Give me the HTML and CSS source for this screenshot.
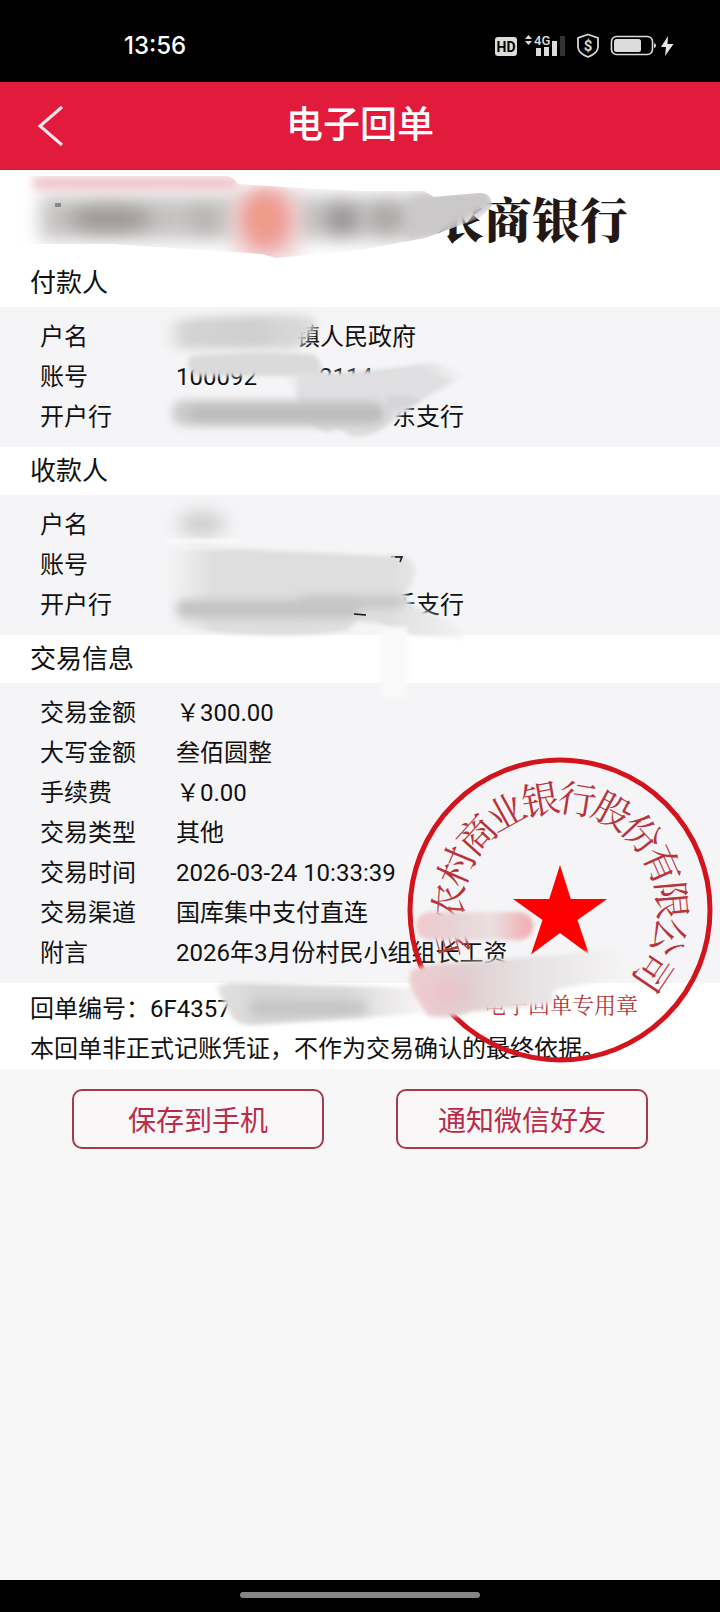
FILE: index.html
```html
<!DOCTYPE html>
<html lang="zh-CN">
<head>
<meta charset="utf-8">
<meta name="viewport" content="width=device-width, initial-scale=1">
<title>电子回单</title>
<link rel="stylesheet" href="styles.css">
</head>
<body>
<div class="status">
  <span class="clock">13:56</span>
  <svg class="status-icons" width="184" height="28" viewBox="492 31 184 28" aria-hidden="true">
    <rect x="495" y="36" width="22" height="19" rx="3" fill="#dcdcdc"/>
    <text class="hd" x="506" y="51">HD</text>
    <path d="M525 38l3.500-4 3.500 4zM525 40l3.500 4 3.500-4z" fill="#dcdcdc"/>
    <text class="net" x="534" y="44">4G</text>
    <path d="M536 47h5v8h-5zM544 46h5v9h-5zM552 40h5v15h-5z" fill="#dcdcdc"/>
    <path d="M560 35h5v20h-5z" fill="#333"/>
    <path d="M588 33.500l10 3.500v9q0 6-10 10q-10-4-10-10v-9z" fill="none" stroke="#d4d4d4" stroke-width="1.800"/>
    <text class="coin" x="588" y="50">$</text>
    <rect x="611.500" y="35.500" width="41" height="18" rx="5" fill="none" stroke="#dcdcdc" stroke-width="1.600"/>
    <rect x="614" y="38" width="27" height="13" rx="2.500" fill="#dcdcdc"/>
    <path d="M654 42q2 .5 2 2.500t-2 2.500z" fill="#dcdcdc"/>
    <path d="M668 35l-7 11h5l-1 9 8.500-12h-6z" fill="#e6e6e6"/>
  </svg>
</div>
<header class="bar">
  <button class="back" type="button" aria-label="返回">
    <svg width="28" height="44" viewBox="34 104 28 44" aria-hidden="true"><path d="M60 107L38 126l22 19" fill="none" stroke="#ffe9ee" stroke-width="3"/></svg>
  </button>
  <h1>电子回单</h1>
</header>
<main class="page">
  <div class="brand">农商银行</div>
  <h2>付款人</h2>
  <dl class="panel">
    <div class="row"><dt>户名</dt><dd class="payer">镇人民政府</dd></div>
    <div class="row"><dt>账号</dt><dd>100092<span class="tail">2114</span></dd></div>
    <div class="row"><dt>开户行</dt><dd class="branch">东支行</dd></div>
  </dl>
  <h2>收款人</h2>
  <dl class="panel">
    <div class="row"><dt>户名</dt><dd></dd></div>
    <div class="row"><dt>账号</dt><dd class="last">7</dd></div>
    <div class="row"><dt>开户行</dt><dd class="branch">乐支行</dd></div>
  </dl>
  <h2>交易信息</h2>
  <dl class="panel">
    <div class="row"><dt>交易金额</dt><dd>&#65509;300.00</dd></div>
    <div class="row"><dt>大写金额</dt><dd>叁佰圆整</dd></div>
    <div class="row"><dt>手续费</dt><dd>&#65509;0.00</dd></div>
    <div class="row"><dt>交易类型</dt><dd>其他</dd></div>
    <div class="row"><dt>交易时间</dt><dd>2026-03-24 10:33:39</dd></div>
    <div class="row"><dt>交易渠道</dt><dd>国库集中支付直连</dd></div>
    <div class="row"><dt>附言</dt><dd>2026年3月份村民小组组长工资</dd></div>
  </dl>
  <div class="notes">
    <p>回单编号&#65306;6F4357</p>
    <p>本回单非正式记账凭证&#65292;不作为交易确认的最终依据。</p>
  </div>
  <svg class="marks" width="720" height="910" viewBox="0 170 720 910" aria-hidden="true">
    <defs>
      <filter id="b1" x="-20%" y="-20%" width="140%" height="140%"><feGaussianBlur stdDeviation="2"/></filter>
      <filter id="b3" x="-20%" y="-80%" width="140%" height="260%"><feGaussianBlur stdDeviation="5"/></filter>
      <filter id="b9" x="-60%" y="-200%" width="220%" height="500%"><feGaussianBlur stdDeviation="9"/></filter>
      <linearGradient id="fade" x1="0" x2="1" y1="0" y2="0">
        <stop offset="0" stop-color="#e4e4e5" stop-opacity="0"/><stop offset=".14" stop-color="#d4d4d5"/>
        <stop offset=".6" stop-color="#cfcfd0"/><stop offset="1" stop-color="#dededf"/>
      </linearGradient>
      <linearGradient id="soft" x1="0" x2="1" y1="0" y2="0">
        <stop offset="0" stop-color="#e4e4e5" stop-opacity="0"/><stop offset=".16" stop-color="#dededf"/>
        <stop offset=".75" stop-color="#dededf"/><stop offset="1" stop-color="#f2f2f4"/>
      </linearGradient>
      <linearGradient id="right" x1="0" x2="1" y1="0" y2="0">
        <stop offset="0" stop-color="#e2e2e2"/><stop offset=".2" stop-color="#d6d6d6"/><stop offset=".6" stop-color="#d8d8d9"/><stop offset="1" stop-color="#fdf9fa"/>
      </linearGradient>
      <linearGradient id="pink" x1="0" x2="1" y1="0" y2="0">
        <stop offset="0" stop-color="#efcdd0"/><stop offset=".25" stop-color="#e0cfd2"/><stop offset=".6" stop-color="#e8e4e5"/><stop offset="1" stop-color="#f5f4f5"/>
      </linearGradient>
      <linearGradient id="pill" x1="0" x2="1" y1="0" y2="0">
        <stop offset="0" stop-color="#f2c9cd"/><stop offset=".3" stop-color="#e7d2d5"/><stop offset=".65" stop-color="#eadfe1"/><stop offset="1" stop-color="#f3a9af"/>
      </linearGradient>
      <clipPath id="band"><path d="M0 176H228Q234 178 238 184L300 188L360 191H424L434 197L478 193Q492 192 492 206L480 218L425 238L360 250L276 258L262 254L110 244H0z"/></clipPath>
    </defs>

    <g class="seal">
      <circle cx="560" cy="910" r="150" fill="none" stroke="#d4141c" stroke-width="5"/>
      <path fill="red" d="M560 865l10.800 34H607l-29.500 21 11.500 34.500-29-21.500-29 21.500 11.500-34.500L513 899h36.200z"/>
      <text transform="rotate(-105 560 910)" x="560" y="812">县</text>
      <text transform="rotate(-86 560 910)" x="560" y="812">农</text>
      <text transform="rotate(-67 560 910)" x="560" y="812">村</text>
      <text transform="rotate(-48 560 910)" x="560" y="812">商</text>
      <text transform="rotate(-29 560 910)" x="560" y="812">业</text>
      <text transform="rotate(-10 560 910)" x="560" y="812">银</text>
      <text transform="rotate(9 560 910)" x="560" y="812">行</text>
      <text transform="rotate(28 560 910)" x="560" y="812">股</text>
      <text transform="rotate(47 560 910)" x="560" y="812">份</text>
      <text transform="rotate(66 560 910)" x="560" y="812">有</text>
      <text transform="rotate(85 560 910)" x="560" y="812">限</text>
      <text transform="rotate(104 560 910)" x="560" y="812">公</text>
      <text transform="rotate(124 560 910)" x="560" y="812">司</text>
      <text class="seal-name" x="561" y="1013">电子回单专用章</text>
    </g>

    <!-- brand smudge -->
    <g clip-path="url(#band)">
      <rect x="40" y="196" width="420" height="44" fill="#c6c3c3" filter="url(#b9)"/>
      <rect x="32" y="176" width="208" height="14" rx="7" fill="#efc6cc" filter="url(#b3)"/>
      <ellipse cx="110" cy="219" rx="42" ry="11" fill="#9a9292" filter="url(#b9)"/>
      <ellipse cx="203" cy="219" rx="10" ry="12" fill="#b3aeae" filter="url(#b9)"/>
      <rect x="232" y="192" width="68" height="70" fill="#f0dcdb" filter="url(#b9)"/>
      <ellipse cx="266" cy="220" rx="26" ry="32" fill="#f09c9a" filter="url(#b9)"/>
      <ellipse cx="264" cy="218" rx="12" ry="14" fill="#ec9c80" filter="url(#b9)"/>
      <ellipse cx="342" cy="219" rx="17" ry="14" fill="#989394" filter="url(#b9)"/>
      <ellipse cx="386" cy="218" rx="16" ry="14" fill="#aaa6a6" filter="url(#b9)"/>
      <path d="M410 196l80-10 6 22-44 20-46 12z" fill="#cbc8c9" filter="url(#b3)"/>
    </g>
    <path d="M55 203h6v4h-6z" fill="#888"/>

    <!-- payer smudges -->
    <path d="M164 322q50-8 142-7 8 0 12 10l-20 24H180q-14 0-18-10z" fill="url(#fade)" filter="url(#b3)"/>
    <path d="M190 356q60-6 122-2 10 4 10 22H196q-12-8-6-20z" fill="#dadadb" filter="url(#b1)"/>
    <path d="M282 372q70 4 148-9 28 4 32 17l-44 21-10 8-24 18q-14 12-34 9l-10-8-12 4q-18-4-20-16z" fill="url(#soft)" filter="url(#b1)"/>
    <path d="M298 376q60 4 118-8l36 12-34 20-14 9-20 18-30 4-56-12z" fill="#e0e0e2" filter="url(#b1)"/>
    <rect x="172" y="400" width="210" height="26" rx="12" fill="#cbcbcc" filter="url(#b3)"/>
    <rect x="190" y="407" width="195" height="14" rx="7" fill="#bcbcbd" filter="url(#b3)"/>
    <path d="M386 396h24l12 3-12 8-16 3-10 14z" fill="#d6d6d8" filter="url(#b1)"/>

    <!-- payee smudges -->
    <ellipse cx="202" cy="524" rx="24" ry="11" fill="#c8c8c9" filter="url(#b9)"/>
    <rect x="166" y="539" width="76" height="4" fill="#fbfbfc" filter="url(#b1)"/>
    <path d="M164 550l80-1 140 7q28-4 32 14-2 14-12 24l6 10 51 24 2 10-50-3-35-12-22-2-8 9q-40 8-110 4-62-4-70-14z" fill="url(#soft)" filter="url(#b1)"/>
    <rect x="176" y="600" width="184" height="18" rx="9" fill="#c3c3c4" filter="url(#b3)"/>
    <rect x="300" y="596" width="104" height="12" rx="6" fill="#c6c6c7" filter="url(#b3)"/>
    <path d="M381 627h26v70h-26z" fill="#f9f9f9" filter="url(#b1)"/>
    <path d="M354 614l12 1M395 557h7l-2 5" fill="none" stroke="#111" stroke-width="1.500"/>

    <!-- receipt number and seal smudges -->
    <path d="M217 988q5-6 24-5l180 5 10 25-176 12q-20 2-28-16z" fill="url(#right)" filter="url(#b1)"/>
    <rect x="250" y="1001" width="116" height="14" fill="#b8b8b8" opacity=".6" filter="url(#b3)"/>
    <rect x="416" y="912" width="117" height="28" rx="14" fill="url(#pill)" filter="url(#b1)"/>
    <path d="M410 972q4-7 44-9l126-10q40-7 48 1v22l-74 14-2 14-82 8q-18 8-42 4-12-18-16-26-4-8-2-16z" fill="url(#pink)" filter="url(#b1)"/>
    <ellipse cx="448" cy="992" rx="25" ry="10" fill="#f3b4b9" opacity=".45" filter="url(#b9)"/>
  </svg>
  <div class="actions">
    <button type="button">保存到手机</button>
    <button type="button">通知微信好友</button>
  </div>
</main>
<footer class="home"><span class="pill"></span></footer>
</body>
</html>
```
FILE: styles.css
```css
* { box-sizing: border-box; }
body {
  margin: 0;
  min-height: 100vh;
  display: flex;
  flex-direction: column;
  background: #f7f7f7;
  color: #111;
  font-family: Roboto, "Noto Sans CJK SC", sans-serif;
  font-size: 24px;
  line-height: 40px;
}
h1, h2, dl, dd, p { margin: 0; font-weight: 400; }
button { font-family: inherit; cursor: pointer; }

.status {
  height: 82px;
  padding: 10px 44px 0 124px;
  display: flex;
  align-items: center;
  justify-content: space-between;
  background: #000;
  color: #fff;
}
.clock { font: 500 24px/32px Inter, sans-serif; }
.hd { font: 700 14px Roboto, sans-serif; text-anchor: middle; fill: #000; }
.net { font: 500 13px Roboto, sans-serif; fill: #dcdcdc; }
.coin { font: 700 15px Roboto, sans-serif; text-anchor: middle; fill: #d4d4d4; }

.bar {
  height: 88px;
  padding: 0 36px;
  display: grid;
  grid-template-columns: 28px 1fr 28px;
  align-items: center;
  background: #e21b3c;
  color: #fff;
}
.back { display: flex; padding: 0; border: 0; background: none; }
.bar h1 { font-size: 37px; font-weight: 500; line-height: 48px; text-align: center; }

.page { position: relative; flex: 1; }
.brand {
  height: 89px;
  padding: 8px 92px 0 0;
  background: #fff;
  color: #231815;
  font-family: "Noto Serif CJK SC", "Noto Sans CJK SC", serif;
  font-size: 48px;
  font-weight: 900;
  line-height: 80px;
  text-align: right;
}
h2 { padding: 0 30px; background: #fff; font-size: 26px; line-height: 48px; }
.panel { padding: 10px 40px; background: #f5f5f7; }
.row { display: grid; grid-template-columns: 136px 1fr; height: 40px; }
.payer { padding-left: 120px; }
.tail { margin-left: 62px; }
.branch { padding-left: 216px; }
.last { padding-left: 214px; }
.notes { padding: 6px 30px 0; background: #fff; }

.marks { position: absolute; top: 0; left: 0; pointer-events: none; }
.seal text {
  fill: #b8343a;
  font-family: "Noto Serif CJK SC", "Noto Sans CJK SC", serif;
  font-size: 38px;
  font-weight: 400;
  text-anchor: middle;
}
.seal .seal-name { font-size: 22px; }

.actions {
  display: grid;
  grid-template-columns: 1fr 1fr;
  gap: 72px;
  padding: 20px 72px;
}
.actions button {
  height: 60px;
  padding: 0;
  border: 2px solid #a83a50;
  border-radius: 10px;
  background: #f9f7f8;
  color: #b82d4a;
  font-size: 28px;
}
.home { height: 32px; padding-top: 12px; background: #000; }
.pill { display: block; width: 240px; height: 6px; margin: 0 auto; border-radius: 3px; background: #858585; }
```
